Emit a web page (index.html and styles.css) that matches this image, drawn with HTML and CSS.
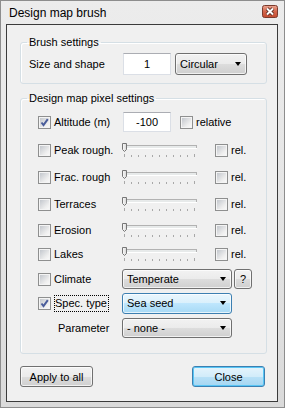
FILE: index.html
```html
<!DOCTYPE html>
<html lang="en">
<head>
    <meta charset="UTF-8">
    <title>Design map brush</title>
    <link rel="stylesheet" href="styles.css">
</head>
<body>
<div class="window">
    <div class="titlebar">
        <span class="title">Design map brush</span>
        <span class="close-x">
            <svg width="16" height="13" viewBox="0 0 16 13">
                <defs>
                    <linearGradient id="red" x1="0" y1="0" x2="0" y2="1">
                        <stop offset="0" stop-color="#eaa693"/>
                        <stop offset="0.5" stop-color="#d5664c"/>
                        <stop offset="1" stop-color="#c24a30"/>
                    </linearGradient>
                </defs>
                <rect x="0.5" y="0.5" width="15" height="12" rx="2" fill="url(#red)" stroke="#7b3b2d"/>
                <path d="M5 3.5 L11 9.5 M11 3.5 L5 9.5" stroke="#4d2219" stroke-width="3.6"/>
                <path d="M5 3.5 L11 9.5 M11 3.5 L5 9.5" stroke="#fff" stroke-width="2"/>
            </svg>
        </span>
    </div>

    <div class="client">
        <fieldset class="group">
            <legend>Brush settings</legend>
            <div class="brush-row">
                <span class="size-label">Size and shape</span>
                <span class="textbox size-box">1</span>
                <span class="combo shape-combo">Circular<i class="arrow"></i></span>
            </div>
        </fieldset>

        <fieldset class="group pixel-group">
            <legend>Design map pixel settings</legend>
            <div class="pixel-grid">
                <div class="row">
                    <span class="check-label"><span class="check checked"><svg width="13" height="13" viewBox="0 0 13 13"><path d="M3.5 6.5 L5.5 9 L9.8 3.2" fill="none" stroke="#4a5d9b" stroke-width="2"/></svg></span>Altitude (m)</span>
                    <span class="textbox alt-box">-100</span>
                    <span class="check relative-check"></span>relative
                </div>
                <div class="row">
                    <span class="check-label"><span class="check"></span>Peak rough.</span>
                    <svg class="slider" width="78" height="18" viewBox="0 0 78 18"><use href="#track"/></svg>
                    <span class="check rel-check"></span>rel.
                </div>
                <div class="row">
                    <span class="check-label"><span class="check"></span>Frac. rough</span>
                    <svg class="slider" width="78" height="18" viewBox="0 0 78 18"><use href="#track"/></svg>
                    <span class="check rel-check"></span>rel.
                </div>
                <div class="row">
                    <span class="check-label"><span class="check"></span>Terraces</span>
                    <svg class="slider" width="78" height="18" viewBox="0 0 78 18"><use href="#track"/></svg>
                    <span class="check rel-check"></span>rel.
                </div>
                <div class="row">
                    <span class="check-label"><span class="check"></span>Erosion</span>
                    <svg class="slider" width="78" height="18" viewBox="0 0 78 18"><use href="#track"/></svg>
                    <span class="check rel-check"></span>rel.
                </div>
                <div class="row">
                    <span class="check-label"><span class="check"></span>Lakes</span>
                    <svg class="slider" width="78" height="18" viewBox="0 0 78 18"><use href="#track"/></svg>
                    <span class="check rel-check"></span>rel.
                </div>
                <div class="row">
                    <span class="check-label"><span class="check"></span>Climate</span>
                    <span class="combo wide-combo">Temperate<i class="arrow"></i></span>
                    <span class="small-btn">?</span>
                </div>
                <div class="row">
                    <span class="check-label"><span class="check checked"><svg width="13" height="13" viewBox="0 0 13 13"><path d="M3.5 6.5 L5.5 9 L9.8 3.2" fill="none" stroke="#4a5d9b" stroke-width="2"/></svg></span><span class="focused">Spec. type</span></span>
                    <span class="combo wide-combo hot">Sea seed<i class="arrow"></i></span>
                </div>
                <div class="row">
                    <span class="check-label param-label">Parameter</span>
                    <span class="combo wide-combo">- none -<i class="arrow"></i></span>
                </div>
            </div>
        </fieldset>

        <div class="buttons">
            <span class="button">Apply to all</span>
            <span class="button default">Close</span>
        </div>
    </div>
</div>

<svg width="0" height="0" class="defs">
    <defs>
        <linearGradient id="thumb" x1="0" y1="0" x2="1" y2="0">
            <stop offset="0" stop-color="#fdfdfd"/>
            <stop offset="1" stop-color="#d6d6d6"/>
        </linearGradient>
        <g id="track">
            <rect x="2.5" y="3.5" width="73" height="3" fill="#e7eaea" stroke="#b2b2b2"/>
            <line x1="3" y1="6.5" x2="76" y2="6.5" stroke="#ffffff"/>
            <g stroke="#a8a8a8">
                <line x1="3.5" y1="12" x2="3.5" y2="15"/>
                <line x1="10.5" y1="13" x2="10.5" y2="15"/>
                <line x1="17.5" y1="13" x2="17.5" y2="15"/>
                <line x1="24.5" y1="13" x2="24.5" y2="15"/>
                <line x1="31.5" y1="13" x2="31.5" y2="15"/>
                <line x1="38.5" y1="13" x2="38.5" y2="15"/>
                <line x1="45.5" y1="13" x2="45.5" y2="15"/>
                <line x1="52.5" y1="13" x2="52.5" y2="15"/>
                <line x1="59.5" y1="13" x2="59.5" y2="15"/>
                <line x1="66.5" y1="13" x2="66.5" y2="15"/>
                <line x1="73.5" y1="12" x2="73.5" y2="15"/>
            </g>
            <path d="M1.5 1.5 H5.5 V7.5 L3.5 9.5 L1.5 7.5 Z" fill="url(#thumb)" stroke="#767676"/>
        </g>
    </defs>
</svg>
</body>
</html>
```

FILE: styles.css
```css
* {
    box-sizing: border-box;
}
body {
    margin: 0;
    font-family: "Liberation Sans", Arial, sans-serif;
    font-size: 11px;
    color: #000;
}
.defs {
    position: absolute;
}
.window {
    width: 285px;
    height: 408px;
    border: 1px solid #8d8d8d;
    background: linear-gradient(#ececec, #e4e4e4 60%, #dadada);
    display: flex;
    flex-direction: column;
}
.titlebar {
    height: 23px;
    display: flex;
    align-items: flex-start;
    justify-content: space-between;
    padding: 4px 6px 0 8px;
}
.title {
    font-size: 12px;
    line-height: 14px;
    margin-top: 1px;
}
.close-x svg {
    display: block;
}
.client {
    height: 378px;
    margin: 0 6px 0 5px;
    border: 1px solid #3b3b3b;
    background: #f0f0f0;
    padding: 10px 0 0 13px;
}
.group {
    margin: 0;
    padding: 0;
    width: 247px;
    border: 1px solid #d5dfe5;
    border-radius: 3px;
    box-shadow: inset 1px 1px 0 #fff;
}
.group legend {
    padding: 0 2px;
    margin-left: 6px;
    line-height: 14px;
}
.brush-row {
    display: flex;
    align-items: center;
    height: 22px;
    margin: 4px 0 8px 8px;
}
.size-label {
    width: 94px;
}
.textbox {
    display: flex;
    align-items: center;
    justify-content: center;
    background: #fff;
    border: 1px solid #dbdfe6;
    border-top-color: #abadb3;
}
.size-box {
    width: 48px;
    height: 22px;
}
.combo {
    position: relative;
    display: flex;
    align-items: center;
    padding-left: 4px;
    border: 1px solid #707070;
    border-radius: 3px;
    background: linear-gradient(#f2f2f2, #ebebeb 50%, #dddddd 50%, #cfcfcf);
    box-shadow: inset 0 0 0 1px rgba(255, 255, 255, 0.7);
}
.combo .arrow {
    position: absolute;
    right: 5px;
    top: 50%;
    margin-top: -2px;
    border-left: 3.5px solid transparent;
    border-right: 3.5px solid transparent;
    border-top: 4px solid #000;
}
.combo.hot {
    border-color: #3c7fb1;
    background: linear-gradient(#eaf6fd, #d9f0fc 50%, #bee6fd 50%, #a7d9f5);
}
.shape-combo {
    width: 72px;
    height: 22px;
    margin-left: 4px;
}
.pixel-group {
    margin-top: 7px;
}
.pixel-grid {
    display: grid;
    grid-template-rows: 28px 27px 27px 26px 24px 25px 24px 25px 20px;
    padding: 7px 0 15px 17px;
}
.row {
    display: flex;
    align-items: center;
    height: 20px;
}
.check-label {
    display: flex;
    align-items: center;
    width: 83px;
    flex-shrink: 0;
}
.check {
    position: relative;
    width: 13px;
    height: 13px;
    flex-shrink: 0;
    margin-right: 3px;
    padding: 1px;
    border: 1px solid #8e8f8f;
    background: linear-gradient(135deg, #c3c7cd, #eeeeee 70%, #f8f8f8) content-box, #f4f4f4;
}
.check svg {
    position: absolute;
    left: -1px;
    top: -1px;
}
.alt-box {
    width: 48px;
    height: 20px;
    margin-left: 2px;
}
.relative-check {
    margin-left: 9px;
}
.slider {
    display: block;
    margin-top: 2px;
}
.rel-check {
    margin-left: 16px;
}
.wide-combo {
    width: 110px;
    height: 20px;
    margin-left: 1px;
}
.hot {
    height: 21px;
}
.small-btn {
    display: flex;
    align-items: center;
    justify-content: center;
    width: 18px;
    height: 20px;
    margin-left: 2px;
    border: 1px solid #707070;
    border-radius: 3px;
    background: linear-gradient(#f2f2f2, #ebebeb 50%, #dddddd 50%, #cfcfcf);
    box-shadow: inset 0 0 0 1px rgba(255, 255, 255, 0.7);
}
.focused {
    border: 1px dotted #000;
    line-height: 15px;
    padding-right: 1px;
}
.param-label {
    padding-left: 20px;
}
.buttons {
    display: flex;
    justify-content: space-between;
    width: 245px;
    margin-top: 12px;
}
.button {
    display: flex;
    align-items: center;
    justify-content: center;
    width: 73px;
    height: 21px;
    border: 1px solid #707070;
    border-radius: 3px;
    background: linear-gradient(#f2f2f2, #ebebeb 50%, #dddddd 50%, #cfcfcf);
    box-shadow: inset 0 0 0 1px rgba(255, 255, 255, 0.7);
}
.button.default {
    border-color: #3c7fb1;
    background: linear-gradient(#e5f4fc, #d2ecfa 50%, #b9e1f7 50%, #a5d6f2);
    box-shadow: inset 0 0 0 1px #58c6f5;
}
```
